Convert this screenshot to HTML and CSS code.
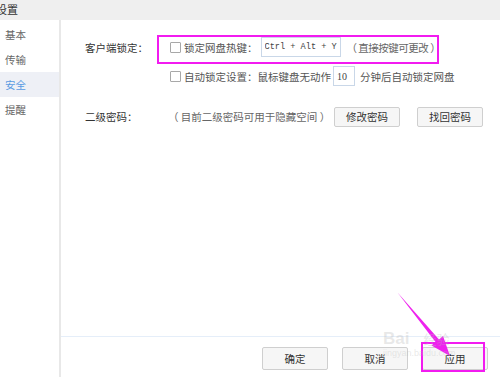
FILE: index.html
```html
<!DOCTYPE html>
<html lang="zh-CN">
<head>
    <meta charset="UTF-8">
    <meta name="viewport" content="width=device-width, initial-scale=1.0">
    <title>设置</title>
    <link rel="stylesheet" href="styles.css">
</head>
<body>
    <div class="window">
        <div class="titlebar"><span class="title">设置</span></div>

        <div class="body">
            <ul class="sidebar">
                <li>基本</li>
                <li>传输</li>
                <li class="active">安全</li>
                <li>提醒</li>
            </ul>

            <div class="main">
                <div class="content">
                    <div class="row row-lock">
                        <span class="label">客户端锁定<span class="punc">：</span></span>
                        <div class="value">
                            <input type="checkbox" class="check">
                            <span class="opt">锁定网盘热键<span class="punc">：</span></span>
                            <input type="text" class="field hotkey" value="Ctrl + Alt + Y">
                            <span class="hint">（ 直接按键可更改 ）</span>
                        </div>
                    </div>

                    <div class="row row-auto">
                        <span class="label"></span>
                        <div class="value">
                            <input type="checkbox" class="check">
                            <span class="opt">自动锁定设置<span class="punc">：</span>鼠标键盘无动作</span>
                            <input type="text" class="field minutes" value="10">
                            <span class="opt after">分钟后自动锁定网盘</span>
                        </div>
                    </div>

                    <div class="row row-pwd">
                        <span class="label">二级密码<span class="punc">：</span></span>
                        <div class="value">
                            <span class="hint desc">（ 目前二级密码可用于隐藏空间 ）</span>
                            <button class="btn small first">修改密码</button>
                            <button class="btn small">找回密码</button>
                        </div>
                    </div>
                </div>

                <div class="footer">
                    <button class="btn">确定</button>
                    <button class="btn">取消</button>
                    <button class="btn">应用</button>
                </div>
            </div>
        </div>

        <!-- annotations drawn over the screenshot -->
        <div class="mark mark-hotkey"></div>
        <div class="mark mark-apply"></div>
        <svg class="arrow" width="500" height="377" viewBox="0 0 500 377">
            <polygon points="397.5,292.5 439,339.5 443,336 450,356 431.5,345.5 435.5,342" fill="#ee22ee"/>
        </svg>
        <div class="watermark">
            <span class="wm-logo">Bai</span><span class="wm-cn">经验</span>
            <span class="wm-url">jingyan.baidu.com</span>
        </div>
    </div>
</body>
</html>
```

FILE: styles.css
```css
body {
    margin: 0;
    font-family: "Noto Sans CJK SC", "Noto Sans", sans-serif;
    font-size: 10.5px;
    color: #333;
    background: white;
}
.window {
    position: relative;
    width: 500px;
    height: 377px;
    overflow: hidden;
    background: white;
}
.titlebar {
    height: 20px;
    line-height: 18px;
    background: #efefef;
    font-size: 11px;
    color: #333;
}
.title {
    margin-left: -4px;
}
.body {
    display: flex;
    height: 357px;
}
.sidebar {
    list-style: none;
    margin: 0;
    padding: 2px 0 0;
    width: 59px;
    border-right: 2px solid #e8e8e8;
}
.sidebar li {
    height: 25px;
    line-height: 25px;
    padding-left: 5px;
    color: #666;
}
.sidebar li.active {
    background: #eef0f6;
    color: #5a9be2;
}
.main {
    flex: 1;
    display: flex;
    flex-direction: column;
}
.content {
    flex: 1;
    padding: 16px 0 0 24px;
}
.row {
    display: flex;
    align-items: center;
    height: 22px;
}
.row-auto {
    margin-top: 7px;
}
.row-pwd {
    margin-top: 19px;
    height: 21px;
}
.label {
    width: 85px;
    flex: none;
    color: #333;
}
.punc {
    font-family: "Noto Sans CJK TC", sans-serif;
}
.value {
    display: flex;
    align-items: center;
}
.check {
    appearance: none;
    margin: 0 3px 0 0;
    width: 11px;
    height: 11px;
    border: 1px solid #a8a8a8;
    border-radius: 1px;
    background: white;
    box-sizing: border-box;
}
.opt {
    color: #555;
}
.hint {
    color: #666;
    white-space: pre;
}
.field {
    box-sizing: border-box;
    height: 20px;
    border: 1px solid #c9d7e8;
    padding: 0 3px;
    font-size: 10px;
    color: #444;
    background: white;
    outline: none;
}
.hotkey {
    width: 80px;
    margin-left: 3px;
    font-family: "Liberation Mono", monospace;
    font-size: 8.6px;
}
.row-lock .hint {
    margin-left: 6px;
    letter-spacing: -0.5px;
}
.minutes {
    width: 22px;
    margin-left: 2px;
    font-family: "Liberation Serif", serif;
}
.after {
    margin-left: 5px;
}
.desc {
    margin-left: -2px;
    width: 166px;
}
.btn {
    width: 66px;
    height: 23px;
    padding: 0;
    border: 1px solid #cfcfcf;
    border-radius: 2px;
    background: #f6f6f6;
    font-family: inherit;
    font-size: 10.5px;
    color: #333;
}
.btn.small {
    height: 20px;
}
.btn.small + .btn.small {
    margin-left: 17px;
}
.footer {
    border-top: 1px solid #e5eef9;
    display: flex;
    justify-content: flex-end;
    gap: 14px;
    padding: 10px 12px 0 0;
    box-sizing: border-box;
    height: 41px;
}
.mark {
    position: absolute;
    border: 2px solid #f21bf0;
    box-sizing: border-box;
}
.mark-hotkey {
    left: 157px;
    top: 35px;
    width: 282px;
    height: 29px;
}
.mark-apply {
    left: 421px;
    top: 342px;
    width: 64px;
    height: 30px;
}
.arrow {
    position: absolute;
    left: 0;
    top: 0;
    pointer-events: none;
}
.watermark {
    position: absolute;
    left: 383px;
    top: 330px;
    color: rgba(190, 190, 190, 0.35);
    line-height: 1;
}
.wm-logo {
    font-family: "Liberation Sans", sans-serif;
    font-weight: bold;
    font-size: 17px;
}
.wm-cn {
    margin-left: 14px;
    font-size: 13px;
}
.wm-url {
    display: block;
    margin-top: 2px;
    font-family: "Liberation Sans", sans-serif;
    font-size: 9px;
}
```
